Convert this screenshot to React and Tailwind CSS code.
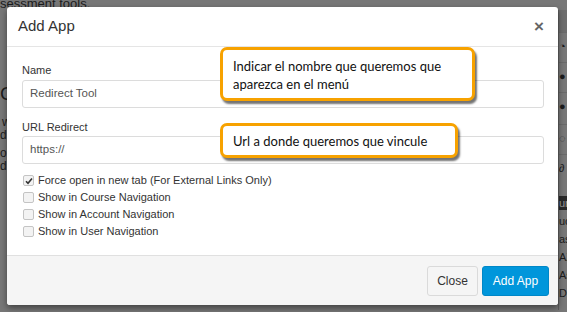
import React from 'react';

const Callout = ({ className, children }) => (
    <div className={`absolute rounded-[7px] border-[3px] border-[#f7a200] bg-white shadow-[2px_3px_2px_rgba(0,0,0,0.55)] px-[10px] text-[13px] leading-[18px] text-[#111] ${className}`} style={{ fontFamily: 'Lato, "Open Sans", sans-serif' }}>
        {children}
    </div>
);

const Check = ({ checked, label }) => (
    <label className="flex items-center h-[17px] gap-[4px] text-[11px] text-[#333]">
        <span className="w-[11px] h-[11px] rounded-[2px] border border-[#c4c4c4] bg-[#f3f3f3] flex items-center justify-center">
            {checked && (
                <svg width="8" height="8" viewBox="0 0 8 8"><path d="M1 4.2 L3 6.3 L7 1.5" stroke="#333" strokeWidth="1.6" fill="none" /></svg>
            )}
        </span>
        <span>{label}</span>
    </label>
);

const App = () => {
    return (
        <div className="relative w-[567px] h-[312px] overflow-hidden bg-[#777777]" style={{ fontFamily: '"Liberation Sans", Arial, sans-serif' }}>
            {/* Dimmed page behind the dialog */}
            <div className="text-[#1c1c1c] text-[13px] leading-[13px] -mt-[3px]">sessment tools.</div>
            <div className="flex justify-between h-[300px]">
                <div className="w-[7px] text-[#1c1c1c] pt-[72px] flex flex-col">
                    <span className="text-[19px] leading-[24px]">C</span>
                    <span className="text-[12px] leading-[12px] mt-[10px] ml-[2px]">w</span>
                    <span className="text-[12px] leading-[12px] mt-[1px]">d</span>
                    <span className="text-[12px] leading-[12px] mt-[6px]">o</span>
                    <span className="text-[12px] leading-[12px] mt-[1px]">d</span>
                </div>
                <div className="w-[9px] border-l border-[#5e5e5e] text-[#1c1c1c] text-[11px] leading-[11px] flex flex-col overflow-hidden">
                    <span className="h-[22px] bg-[#6d6d6d]"></span>
                    <span className="h-[30px] border-t border-[#6a6a6a] pt-[8px]">◔</span>
                    <span className="h-[30px] border-t border-[#6a6a6a] pt-[8px]">●</span>
                    <span className="h-[32px] border-t border-[#6a6a6a] pt-[8px]">●</span>
                    <span className="h-[30px] border-t border-[#6a6a6a] pt-[8px]">◌</span>
                    <span className="h-[42px] border-t border-[#6a6a6a] pt-[8px]">∂</span>
                    <span className="h-[14px] bg-[#2a2a2a] text-[#999] pt-[2px]">ur</span>
                    <span className="h-[20px] pt-[6px]">uc</span>
                    <span className="h-[18px] pt-[4px]">as</span>
                    <span className="h-[18px] pt-[4px]">AZ</span>
                    <span className="h-[18px] pt-[4px]">As</span>
                    <span className="h-[18px] pt-[4px]">Des</span>
                </div>
            </div>

            {/* Modal */}
            <div className="absolute left-[7px] top-[7px] w-[551px] h-[298px] bg-white rounded-[3px] shadow-[0_3px_6px_rgba(0,0,0,0.45)] flex flex-col">
                <div className="h-[40px] border-b border-[#e5e5e5] flex items-center justify-between pl-[11px] pr-[14px]">
                    <h1 className="text-[15px] text-[#333]">Add App</h1>
                    <span className="text-[17px] text-[#666] font-bold leading-none">×</span>
                </div>
                <div className="flex-1 pl-[15px] pr-[14px] pt-[16px] text-[11px]">
                    <div className="text-[#333] leading-[14px]">Name</div>
                    <div className="mt-[3px] h-[28px] border border-[#dcdcdc] rounded-[3px] flex items-center px-[7px] text-[11.5px] text-[#555]">Redirect Tool</div>
                    <div className="mt-[12px] text-[#333] leading-[14px]">URL Redirect</div>
                    <div className="mt-[2px] h-[28px] border border-[#dcdcdc] rounded-[3px] flex items-center px-[7px] text-[11.5px] text-[#555]">https://</div>
                    <div className="mt-[8px] flex flex-col pl-[1px]">
                        <Check checked label="Force open in new tab (For External Links Only)" />
                        <Check label="Show in Course Navigation" />
                        <Check label="Show in Account Navigation" />
                        <Check label="Show in User Navigation" />
                    </div>
                </div>
                <div className="h-[50px] border-t border-[#e0e0e0] bg-[#f5f5f5] rounded-b-[3px] flex items-center justify-end gap-[4px] pr-[9px]">
                    <button className="w-[51px] h-[30px] border border-[#dadada] rounded-[3px] bg-[#f5f5f5] text-[12px] text-[#333]">Close</button>
                    <button className="w-[67px] h-[30px] rounded-[3px] bg-[#0096db] border border-[#0087c7] text-[12px] text-white">Add App</button>
                </div>
            </div>

            {/* Annotations */}
            <Callout className="left-[220px] top-[47px] w-[255px] h-[54px] pt-[7px]">
                Indicar el nombre que queremos que<br />aparezca en el menú
            </Callout>
            <Callout className="left-[220px] top-[123px] w-[238px] h-[35px] pt-[6px]">
                Url a donde queremos que vincule
            </Callout>
        </div>
    );
};

export default App;
